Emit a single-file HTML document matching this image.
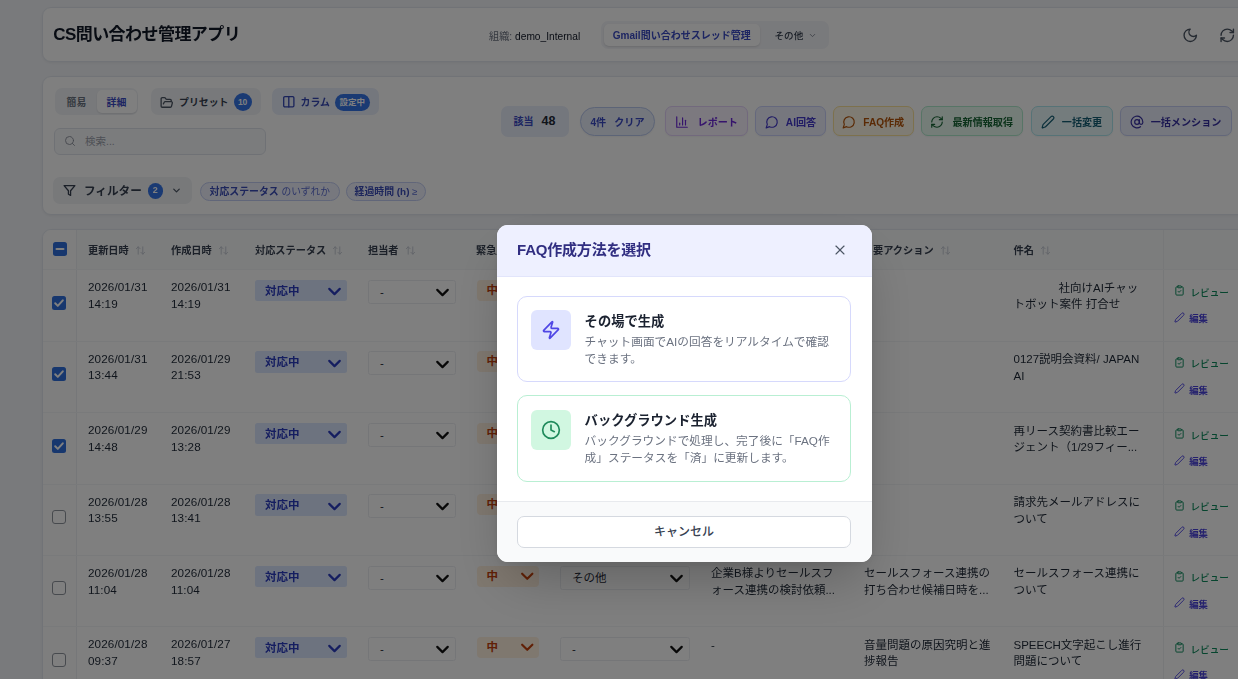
<!DOCTYPE html>
<html lang="ja">
<head>
<meta charset="utf-8">
<title>CS問い合わせ管理アプリ</title>
<style>
*{box-sizing:border-box;margin:0;padding:0}
html,body{width:1238px;height:679px;overflow:hidden}
body{font-family:"Liberation Sans","Noto Sans CJK JP",sans-serif;background:#f3f5f9;color:#1f2937;position:relative;font-size:12px}
#bg{position:absolute;left:0;top:0;width:1238px;height:679px;overflow:hidden;filter:blur(.55px)}
.card{position:absolute;background:#fff;border:1px solid #e3e7ee;border-radius:9px;box-shadow:0 1px 3px rgba(0,0,0,.06)}
.abs{position:absolute}
svg{display:block}
#hdr{left:42px;top:7px;width:1260px;height:55px}
#title{left:53.2px;top:21.2px;font-size:17px;font-weight:700;color:#111827;line-height:28px;white-space:nowrap;letter-spacing:-.55px}
#org{left:489px;top:29.5px;font-size:10.2px;line-height:14px;color:#6b7280;white-space:nowrap}
#org b{color:#111827;font-weight:400}
#tabs{left:601px;top:20.5px;width:228px;height:28px;background:#f3f4f8;border-radius:7px}
#tab1{left:604px;top:23.5px;width:155.5px;height:22.5px;background:#fff;border-radius:5px;box-shadow:0 1px 2px rgba(0,0,0,.12);font-size:10px;font-weight:700;color:#3b4bc4;text-align:center;line-height:24.5px;white-space:nowrap}
#tab2{left:774.5px;top:23.5px;height:22.5px;font-size:9.6px;line-height:24.5px;color:#374151;white-space:nowrap;font-weight:500}
#tb{left:42px;top:75.5px;width:1260px;height:139px}
.pillbox{position:absolute;background:#f1f3f7;border-radius:7px}
.tbtxt{position:absolute;white-space:nowrap;font-weight:700}
.badge{background:#3474e6;color:#fff;text-align:center;font-weight:700}
#search{left:54px;top:128px;width:212px;height:26.5px;border:1px solid #dfe3ea;border-radius:6px;background:#f7f8fb}
#cnt{left:500.5px;top:105.5px;width:68px;height:31px;border-radius:7px;background:#e8eefb;font-weight:700;text-align:center;line-height:31px;white-space:nowrap}
.btn{position:absolute;top:106px;height:30px;border-radius:7px;border:1.5px solid;font-size:10.1px;font-weight:700;white-space:nowrap;display:flex;align-items:center;justify-content:center;gap:6px;box-shadow:0 1px 2px rgba(0,0,0,.05);padding-top:1px}
.chip{position:absolute;top:181.5px;height:19px;border-radius:10px;border:1px solid #c3cdf2;background:#eef1fd;font-size:9.9px;line-height:17px;color:#3b4cb8;white-space:nowrap;text-align:center;font-weight:700}
.chip i{font-style:normal;font-weight:400;color:#5b6bd0;font-size:9.7px}
#tbl{left:42px;top:228.5px;width:1260px;height:520px}
#thbg{left:43px;top:229.5px;width:1200px;height:40px;background:#f9fafb;border-bottom:1px solid #e9ecf0;border-top-left-radius:9px}
#stick{left:43px;top:229.5px;width:34px;height:460px;border-right:1px solid #eceff3;background:#fcfcfd;border-top-left-radius:9px}
.th{position:absolute;top:244px;font-size:10.2px;font-weight:700;color:#374151;line-height:14px;white-space:nowrap}
.row{position:absolute;left:43px;width:1260px;height:72px;border-top:1px solid #f3f4f7}
.row>*{position:absolute}
.dt{font-size:11.7px;line-height:16.7px;color:#1f2937;top:9px;white-space:nowrap;letter-spacing:.1px}
.cb{width:14px;height:14px;border-radius:2.5px}
.row .cb{left:9.2px;top:25.6px}
.cb.on{background:#2f6fdd}
.cb.off{border:1.4px solid #8e949d;background:#fff;border-radius:3px}
.st{left:212.4px;top:9.7px;width:92px;height:21.5px;border-radius:2.5px;background:#dbe7ff;color:#2b3cc0;font-weight:700;font-size:11.5px;line-height:22.5px;padding-left:9.5px}
.sel{top:9.7px;height:24px;border:1px solid #ebedf1;border-radius:2.5px;background:#fff;font-size:11.5px;line-height:22px;padding-left:11px;color:#1f2937}
.ur{left:433.5px;top:9.7px;width:62.5px;height:21px;border-radius:4px;background:#fff0df;color:#c2410c;font-weight:700;font-size:11.5px;line-height:21px;padding-left:10px}
.tx{font-size:11.5px;line-height:16.6px;color:#1f2937;top:9.5px}
.redact{display:inline-block;width:45px;height:10px}
.actbg{left:1120px;top:0;width:140px;height:71.5px;border-left:1px solid #eef0f3}
.rv{left:1131.5px;top:15.6px;font-size:9.6px;line-height:14px;color:#0c8a5c;font-weight:500;white-space:nowrap;display:flex;gap:5px;align-items:center}
.ed{left:1131.5px;top:42px;font-size:9.4px;line-height:14px;color:#4a43dc;font-weight:700;white-space:nowrap;display:flex;gap:4.5px;align-items:center}
#ov{position:absolute;left:0;top:0;width:1238px;height:679px;background:rgba(0,0,0,.5)}
#modal{position:absolute;left:497px;top:224.5px;width:374.5px;height:337px;background:#fff;border-radius:11px;overflow:hidden;box-shadow:0 25px 50px -12px rgba(0,0,0,.25),0 2px 8px rgba(0,0,0,.07)}
#mh{position:absolute;left:0;top:0;width:375px;height:52.3px;background:#eef0ff;border-bottom:1px solid #e2e5fb}
#mt{position:absolute;left:20px;top:13.8px;font-size:15px;font-weight:700;color:#312e81;line-height:24px;white-space:nowrap;letter-spacing:-.2px}
.opt{position:absolute;left:19.8px;width:334.5px;border-radius:10px;background:#fff;border:1.5px solid}
.ico{position:absolute;left:13px;top:13.5px;width:40px;height:40px;border-radius:6px;display:flex;align-items:center;justify-content:center}
.ot{position:absolute;left:66.8px;top:15px;font-size:13.3px;font-weight:700;color:#1b2230;line-height:20px;white-space:nowrap}
.od{position:absolute;left:66.8px;top:36px;width:252px;font-size:11.7px;line-height:17px;color:#6b7280}
#mf{position:absolute;left:0;top:276.3px;width:375px;height:62px;background:#f9fafb;border-top:1px solid #e8eaee}
#cancel{position:absolute;left:19.8px;top:14.2px;width:334.5px;height:32px;border:1px solid #d5d9e0;border-radius:7px;background:#fff;text-align:center;font-size:12px;line-height:30px;color:#374151;font-weight:500}

#acth{left:1163px;top:229.5px;width:1px;height:40px;background:#eef0f3}

</style>
</head>
<body>
<div id="bg">
<!-- HEADER -->
<div class="card" id="hdr"></div>
<div class="abs" id="title">CS問い合わせ管理アプリ</div>
<div class="abs" id="org">組織: <b>demo_Internal</b></div>
<div class="abs" id="tabs"></div>
<div class="abs" id="tab1">Gmail問い合わせスレッド管理</div>
<div class="abs" id="tab2">その他<svg width="9" height="9" viewBox="0 0 24 24" fill="none" stroke="#6b7280" stroke-width="2" stroke-linecap="round" stroke-linejoin="round" style="flex:none;display:inline-block;margin-left:5px;vertical-align:-1px"><path d="m6 9 6 6 6-6"/></svg></div>
<div class="abs" style="left:1181.9px;top:26.6px"><svg width="16.5" height="16.5" viewBox="0 0 24 24" fill="none" stroke="#4b5563" stroke-width="2" stroke-linecap="round" stroke-linejoin="round" style="flex:none;"><path d="M12 3a6 6 0 0 0 9 9 9 9 0 1 1-9-9Z"/></svg></div>
<div class="abs" style="left:1218.5px;top:26.6px"><svg width="16.5" height="16.5" viewBox="0 0 24 24" fill="none" stroke="#4b5563" stroke-width="2" stroke-linecap="round" stroke-linejoin="round" style="flex:none;"><path d="M3 12a9 9 0 0 1 9-9 9.75 9.75 0 0 1 6.74 2.74L21 8"/><path d="M21 3v5h-5"/><path d="M21 12a9 9 0 0 1-9 9 9.75 9.75 0 0 1-6.74-2.74L3 16"/><path d="M8 16H3v5"/></svg></div>
<!-- TOOLBAR -->
<div class="card" id="tb"></div>
<div class="pillbox" style="left:55px;top:88px;width:83px;height:27px"></div>
<div class="abs" style="left:97px;top:90px;width:39.5px;height:23px;background:#fff;border-radius:5px;box-shadow:0 1px 2px rgba(0,0,0,.1)"></div>
<div class="tbtxt" style="left:66.5px;top:96px;font-size:9.9px;line-height:14px;color:#6b7280">簡易</div>
<div class="tbtxt" style="left:106.5px;top:96px;font-size:9.9px;line-height:14px;color:#3b4bc4">詳細</div>
<div class="pillbox" style="left:151px;top:88px;width:110px;height:27px"></div>
<div class="abs" style="left:160px;top:95.5px"><svg width="13.5" height="13.5" viewBox="0 0 24 24" fill="none" stroke="#4b5563" stroke-width="2.3" stroke-linecap="round" stroke-linejoin="round" style="flex:none;"><path d="m6 14 1.5-2.9A2 2 0 0 1 9.24 10H20a2 2 0 0 1 1.94 2.5l-1.54 6a2 2 0 0 1-1.95 1.5H4a2 2 0 0 1-2-2V5a2 2 0 0 1 2-2h3.9a2 2 0 0 1 1.69.9l.81 1.2a2 2 0 0 0 1.67.9H18a2 2 0 0 1 2 2v2"/></svg></div>
<div class="tbtxt" style="left:179px;top:96px;font-size:9.9px;line-height:14px;color:#374151">プリセット</div>
<div class="abs badge" style="left:233.5px;top:93px;width:18px;height:18px;border-radius:9px;line-height:18px;font-size:8.5px;letter-spacing:-.3px">10</div>
<div class="pillbox" style="left:272px;top:88px;width:107px;height:27px;background:#e9eefb"></div>
<div class="abs" style="left:281.6px;top:95px"><svg width="13.6" height="13.6" viewBox="0 0 24 24" fill="none" stroke="#3447b5" stroke-width="2.3" stroke-linecap="round" stroke-linejoin="round" style="flex:none;"><rect x="3" y="3" width="18" height="18" rx="2"/><path d="M12 3v18"/></svg></div>
<div class="tbtxt" style="left:300.5px;top:96px;font-size:9.9px;line-height:14px;color:#3447b5">カラム</div>
<div class="abs badge" style="left:335px;top:94px;width:34.5px;height:16.5px;border-radius:9px;line-height:16.5px;font-size:8.5px">設定中</div>
<div class="abs" id="search"></div>
<div class="abs" style="left:63.5px;top:135px"><svg width="12" height="12" viewBox="0 0 24 24" fill="none" stroke="#8a909b" stroke-width="1.8" stroke-linecap="round" stroke-linejoin="round" style="flex:none;"><circle cx="11" cy="11" r="8"/><path d="m21 21-4.3-4.3"/></svg></div>
<div class="abs" style="left:85px;top:134px;font-size:10.5px;line-height:14px;color:#9aa0aa;white-space:nowrap">検索...</div>
<div class="pillbox" style="left:53px;top:177px;width:139px;height:27px;background:#f0f2f5"></div>
<div class="abs" style="left:63px;top:184px"><svg width="13" height="13" viewBox="0 0 24 24" fill="none" stroke="#374151" stroke-width="2.4" stroke-linecap="round" stroke-linejoin="round" style="flex:none;"><polygon points="22 3 2 3 10 12.46 10 19 14 21 14 12.46 22 3"/></svg></div>
<div class="tbtxt" style="left:84px;top:183.1px;font-size:11.6px;line-height:16px;color:#374151">フィルター</div>
<div class="abs badge" style="left:147.5px;top:183.3px;width:15.5px;height:15.5px;border-radius:8px;line-height:15.5px;font-size:9px">2</div>
<div class="abs" style="left:170.5px;top:184.6px"><svg width="11" height="11" viewBox="0 0 24 24" fill="none" stroke="#4b5563" stroke-width="2.7" stroke-linecap="round" stroke-linejoin="round" style="flex:none;"><path d="m6 9 6 6 6-6"/></svg></div>
<div class="chip" style="left:200px;width:139.5px">対応ステータス<i>&nbsp;のいずれか</i></div>
<div class="chip" style="left:346px;width:80px">経過時間 (h)<i>&nbsp;≥</i></div>
<div class="abs" id="cnt"><span style="color:#3b4bc4;font-size:10px">該当</span><span style="color:#1f2937;font-size:12.5px;margin-left:8px">48</span></div>
<div class="btn" style="left:580px;width:75px;color:#3b4bc4;background:#e8eefb;border-color:#b9c8ee;border-radius:16px;gap:8px;top:106.5px;height:29px"><span>4件</span><span>クリア</span></div>
<div class="btn" style="left:665px;width:82.5px;color:#6d28d9;background:#f8f2ff;border-color:#e4d2fb;gap:9px"><svg width="14" height="14" viewBox="0 0 24 24" fill="none" stroke="#6d28d9" stroke-width="2" stroke-linecap="round" stroke-linejoin="round" style="flex:none;"><path d="M3 3v18h18"/><path d="M18 17V9"/><path d="M13 17V5"/><path d="M8 17v-3"/></svg><span>レポート</span></div>
<div class="btn" style="left:755px;width:71px;color:#4338ca;background:#eceffd;border-color:#cad1fa;gap:7px"><svg width="14" height="14" viewBox="0 0 24 24" fill="none" stroke="#4338ca" stroke-width="2" stroke-linecap="round" stroke-linejoin="round" style="flex:none;"><path d="M7.9 20A9 9 0 1 0 4 16.1L2 22Z"/></svg><span>AI回答</span></div>
<div class="btn" style="left:832.5px;width:81.5px;color:#b45309;background:#fff9e8;border-color:#fae29a;gap:7px"><svg width="14" height="14" viewBox="0 0 24 24" fill="none" stroke="#b45309" stroke-width="2" stroke-linecap="round" stroke-linejoin="round" style="flex:none;"><path d="M7.9 20A9 9 0 1 0 4 16.1L2 22Z"/></svg><span>FAQ作成</span></div>
<div class="btn" style="left:920.5px;width:102.5px;color:#166534;background:#e8faf1;border-color:#aeeacc;gap:8px"><svg width="14" height="14" viewBox="0 0 24 24" fill="none" stroke="#166534" stroke-width="2" stroke-linecap="round" stroke-linejoin="round" style="flex:none;"><path d="M3 12a9 9 0 0 1 9-9 9.75 9.75 0 0 1 6.74 2.74L21 8"/><path d="M21 3v5h-5"/><path d="M21 12a9 9 0 0 1-9 9 9.75 9.75 0 0 1-6.74-2.74L3 16"/><path d="M8 16H3v5"/></svg><span>最新情報取得</span></div>
<div class="btn" style="left:1030.5px;width:82px;color:#155e75;background:#e8f9fb;border-color:#ade6ee;gap:7px"><svg width="14" height="14" viewBox="0 0 24 24" fill="none" stroke="#155e75" stroke-width="2" stroke-linecap="round" stroke-linejoin="round" style="flex:none;"><path d="M21.174 6.812a1 1 0 0 0-3.986-3.987L3.842 16.174a2 2 0 0 0-.5.83l-1.321 4.352a.5.5 0 0 0 .623.622l4.353-1.32a2 2 0 0 0 .83-.497z"/></svg><span>一括変更</span></div>
<div class="btn" style="left:1119.5px;width:112px;color:#3730a3;background:#eaeefc;border-color:#c6cff5;gap:7px"><svg width="14" height="14" viewBox="0 0 24 24" fill="none" stroke="#3730a3" stroke-width="2" stroke-linecap="round" stroke-linejoin="round" style="flex:none;"><circle cx="12" cy="12" r="4"/><path d="M16 8v5a3 3 0 0 0 6 0v-1a10 10 0 1 0-4 8"/></svg><span>一括メンション</span></div>
<!-- TABLE -->
<div class="card" id="tbl"></div>
<div class="abs" id="thbg"></div>
<div class="abs" id="stick"></div>
<div class="abs" id="acth"></div>
<div class="abs cb on" style="left:52.5px;top:241.5px"><svg width="14" height="14" viewBox="0 0 14 14" fill="none" stroke="#fff" stroke-width="2.2" stroke-linecap="round"><path d="M3.6 7h6.8"/></svg></div>
<div class="th" style="left:88px">更新日時<svg width="11" height="11" viewBox="0 0 24 24" fill="none" stroke="#c3c8d1" stroke-width="2" stroke-linecap="round" stroke-linejoin="round" style="flex:none;display:inline-block;vertical-align:-2px;margin-left:6px"><path d="m21 16-4 4-4-4"/><path d="M17 20V4"/><path d="m3 8 4-4 4 4"/><path d="M7 4v16"/></svg></div><div class="th" style="left:171px">作成日時<svg width="11" height="11" viewBox="0 0 24 24" fill="none" stroke="#c3c8d1" stroke-width="2" stroke-linecap="round" stroke-linejoin="round" style="flex:none;display:inline-block;vertical-align:-2px;margin-left:6px"><path d="m21 16-4 4-4-4"/><path d="M17 20V4"/><path d="m3 8 4-4 4 4"/><path d="M7 4v16"/></svg></div><div class="th" style="left:255px">対応ステータス<svg width="11" height="11" viewBox="0 0 24 24" fill="none" stroke="#c3c8d1" stroke-width="2" stroke-linecap="round" stroke-linejoin="round" style="flex:none;display:inline-block;vertical-align:-2px;margin-left:6px"><path d="m21 16-4 4-4-4"/><path d="M17 20V4"/><path d="m3 8 4-4 4 4"/><path d="M7 4v16"/></svg></div><div class="th" style="left:368px">担当者<svg width="11" height="11" viewBox="0 0 24 24" fill="none" stroke="#c3c8d1" stroke-width="2" stroke-linecap="round" stroke-linejoin="round" style="flex:none;display:inline-block;vertical-align:-2px;margin-left:6px"><path d="m21 16-4 4-4-4"/><path d="M17 20V4"/><path d="m3 8 4-4 4 4"/><path d="M7 4v16"/></svg></div><div class="th" style="left:476px">緊急度<svg width="11" height="11" viewBox="0 0 24 24" fill="none" stroke="#c3c8d1" stroke-width="2" stroke-linecap="round" stroke-linejoin="round" style="flex:none;display:inline-block;vertical-align:-2px;margin-left:6px"><path d="m21 16-4 4-4-4"/><path d="M17 20V4"/><path d="m3 8 4-4 4 4"/><path d="M7 4v16"/></svg></div><div class="th" style="left:560px">カテゴリ<svg width="11" height="11" viewBox="0 0 24 24" fill="none" stroke="#c3c8d1" stroke-width="2" stroke-linecap="round" stroke-linejoin="round" style="flex:none;display:inline-block;vertical-align:-2px;margin-left:6px"><path d="m21 16-4 4-4-4"/><path d="M17 20V4"/><path d="m3 8 4-4 4 4"/><path d="M7 4v16"/></svg></div><div class="th" style="left:711px">内容</div><div class="th" style="left:873px">要アクション<svg width="11" height="11" viewBox="0 0 24 24" fill="none" stroke="#c3c8d1" stroke-width="2" stroke-linecap="round" stroke-linejoin="round" style="flex:none;display:inline-block;vertical-align:-2px;margin-left:6px"><path d="m21 16-4 4-4-4"/><path d="M17 20V4"/><path d="m3 8 4-4 4 4"/><path d="M7 4v16"/></svg></div><div class="th" style="left:1013.5px">件名<svg width="11" height="11" viewBox="0 0 24 24" fill="none" stroke="#c3c8d1" stroke-width="2" stroke-linecap="round" stroke-linejoin="round" style="flex:none;display:inline-block;vertical-align:-2px;margin-left:6px"><path d="m21 16-4 4-4-4"/><path d="M17 20V4"/><path d="m3 8 4-4 4 4"/><path d="M7 4v16"/></svg></div>
<div class="row" style="top:269.3px">
<div class="cb on"><svg width="14" height="14" viewBox="0 0 14 14" fill="none" stroke="#fff" stroke-width="2" stroke-linecap="round" stroke-linejoin="round"><path d="M3.2 7.3l2.6 2.6 5-5.6"/></svg></div>
<div class="dt" style="left:45px">2026/01/31<br>14:19</div>
<div class="dt" style="left:128px">2026/01/31<br>14:19</div>
<div class="st">対応中<svg width="21" height="21" viewBox="0 0 24 24" fill="none" stroke="#2b3cc0" stroke-width="2.5" stroke-linecap="round" stroke-linejoin="round" style="flex:none;position:absolute;right:2.4px;top:1.4px"><path d="m6 9 6 6 6-6"/></svg></div>
<div class="sel" style="left:325px;width:88px">-<svg width="21" height="21" viewBox="0 0 24 24" fill="none" stroke="#111" stroke-width="2.5" stroke-linecap="round" stroke-linejoin="round" style="flex:none;position:absolute;right:2.3px;top:1.2px"><path d="m6 9 6 6 6-6"/></svg></div>
<div class="ur">中<svg width="20.5" height="20.5" viewBox="0 0 24 24" fill="none" stroke="#c2410c" stroke-width="2.5" stroke-linecap="round" stroke-linejoin="round" style="flex:none;position:absolute;right:2px;top:.5px"><path d="m6 9 6 6 6-6"/></svg></div>
<div class="sel" style="left:517px;width:130px">-<svg width="21" height="21" viewBox="0 0 24 24" fill="none" stroke="#111" stroke-width="2.5" stroke-linecap="round" stroke-linejoin="round" style="flex:none;position:absolute;right:2.3px;top:1.2px"><path d="m6 9 6 6 6-6"/></svg></div>
<div class="tx" style="left:668px;width:128px"></div>
<div class="tx" style="left:821px;width:134px"></div>
<div class="tx" style="left:970.5px;width:134px"><span class="redact"></span>社向けAIチャットボット案件 打合せ</div>
<div class="actbg"></div>
<div class="rv"><svg width="11" height="11" viewBox="0 0 24 24" fill="none" stroke="#0c8a5c" stroke-width="2.1" stroke-linecap="round" stroke-linejoin="round" style="flex:none;position:relative;left:-.8px;top:-2.1px"><rect x="8" y="2" width="8" height="4" rx="1"/><path d="M16 4h2a2 2 0 0 1 2 2v14a2 2 0 0 1-2 2H6a2 2 0 0 1-2-2V6a2 2 0 0 1 2-2h2"/><path d="m9 14 2 2 4-4"/></svg><span>レビュー</span></div>
<div class="ed"><svg width="11" height="11" viewBox="0 0 24 24" fill="none" stroke="#4f46e5" stroke-width="2.1" stroke-linecap="round" stroke-linejoin="round" style="flex:none;position:relative;left:-.8px;top:-2px"><path d="M21.174 6.812a1 1 0 0 0-3.986-3.987L3.842 16.174a2 2 0 0 0-.5.83l-1.321 4.352a.5.5 0 0 0 .623.622l4.353-1.32a2 2 0 0 0 .83-.497z"/></svg><span style="position:relative;left:-.8px">編集</span></div>
</div>
<div class="row" style="top:340.70000000000005px">
<div class="cb on"><svg width="14" height="14" viewBox="0 0 14 14" fill="none" stroke="#fff" stroke-width="2" stroke-linecap="round" stroke-linejoin="round"><path d="M3.2 7.3l2.6 2.6 5-5.6"/></svg></div>
<div class="dt" style="left:45px">2026/01/31<br>13:44</div>
<div class="dt" style="left:128px">2026/01/29<br>21:53</div>
<div class="st">対応中<svg width="21" height="21" viewBox="0 0 24 24" fill="none" stroke="#2b3cc0" stroke-width="2.5" stroke-linecap="round" stroke-linejoin="round" style="flex:none;position:absolute;right:2.4px;top:1.4px"><path d="m6 9 6 6 6-6"/></svg></div>
<div class="sel" style="left:325px;width:88px">-<svg width="21" height="21" viewBox="0 0 24 24" fill="none" stroke="#111" stroke-width="2.5" stroke-linecap="round" stroke-linejoin="round" style="flex:none;position:absolute;right:2.3px;top:1.2px"><path d="m6 9 6 6 6-6"/></svg></div>
<div class="ur">中<svg width="20.5" height="20.5" viewBox="0 0 24 24" fill="none" stroke="#c2410c" stroke-width="2.5" stroke-linecap="round" stroke-linejoin="round" style="flex:none;position:absolute;right:2px;top:.5px"><path d="m6 9 6 6 6-6"/></svg></div>
<div class="sel" style="left:517px;width:130px">-<svg width="21" height="21" viewBox="0 0 24 24" fill="none" stroke="#111" stroke-width="2.5" stroke-linecap="round" stroke-linejoin="round" style="flex:none;position:absolute;right:2.3px;top:1.2px"><path d="m6 9 6 6 6-6"/></svg></div>
<div class="tx" style="left:668px;width:128px"></div>
<div class="tx" style="left:821px;width:134px"></div>
<div class="tx" style="left:970.5px;width:134px">0127説明会資料/ JAPAN AI</div>
<div class="actbg"></div>
<div class="rv"><svg width="11" height="11" viewBox="0 0 24 24" fill="none" stroke="#0c8a5c" stroke-width="2.1" stroke-linecap="round" stroke-linejoin="round" style="flex:none;position:relative;left:-.8px;top:-2.1px"><rect x="8" y="2" width="8" height="4" rx="1"/><path d="M16 4h2a2 2 0 0 1 2 2v14a2 2 0 0 1-2 2H6a2 2 0 0 1-2-2V6a2 2 0 0 1 2-2h2"/><path d="m9 14 2 2 4-4"/></svg><span>レビュー</span></div>
<div class="ed"><svg width="11" height="11" viewBox="0 0 24 24" fill="none" stroke="#4f46e5" stroke-width="2.1" stroke-linecap="round" stroke-linejoin="round" style="flex:none;position:relative;left:-.8px;top:-2px"><path d="M21.174 6.812a1 1 0 0 0-3.986-3.987L3.842 16.174a2 2 0 0 0-.5.83l-1.321 4.352a.5.5 0 0 0 .623.622l4.353-1.32a2 2 0 0 0 .83-.497z"/></svg><span style="position:relative;left:-.8px">編集</span></div>
</div>
<div class="row" style="top:412.1px">
<div class="cb on"><svg width="14" height="14" viewBox="0 0 14 14" fill="none" stroke="#fff" stroke-width="2" stroke-linecap="round" stroke-linejoin="round"><path d="M3.2 7.3l2.6 2.6 5-5.6"/></svg></div>
<div class="dt" style="left:45px">2026/01/29<br>14:48</div>
<div class="dt" style="left:128px">2026/01/29<br>13:28</div>
<div class="st">対応中<svg width="21" height="21" viewBox="0 0 24 24" fill="none" stroke="#2b3cc0" stroke-width="2.5" stroke-linecap="round" stroke-linejoin="round" style="flex:none;position:absolute;right:2.4px;top:1.4px"><path d="m6 9 6 6 6-6"/></svg></div>
<div class="sel" style="left:325px;width:88px">-<svg width="21" height="21" viewBox="0 0 24 24" fill="none" stroke="#111" stroke-width="2.5" stroke-linecap="round" stroke-linejoin="round" style="flex:none;position:absolute;right:2.3px;top:1.2px"><path d="m6 9 6 6 6-6"/></svg></div>
<div class="ur">中<svg width="20.5" height="20.5" viewBox="0 0 24 24" fill="none" stroke="#c2410c" stroke-width="2.5" stroke-linecap="round" stroke-linejoin="round" style="flex:none;position:absolute;right:2px;top:.5px"><path d="m6 9 6 6 6-6"/></svg></div>
<div class="sel" style="left:517px;width:130px">-<svg width="21" height="21" viewBox="0 0 24 24" fill="none" stroke="#111" stroke-width="2.5" stroke-linecap="round" stroke-linejoin="round" style="flex:none;position:absolute;right:2.3px;top:1.2px"><path d="m6 9 6 6 6-6"/></svg></div>
<div class="tx" style="left:668px;width:128px"></div>
<div class="tx" style="left:821px;width:134px"></div>
<div class="tx" style="left:970.5px;width:134px">再リース契約書比較エージェント（1/29フィー...</div>
<div class="actbg"></div>
<div class="rv"><svg width="11" height="11" viewBox="0 0 24 24" fill="none" stroke="#0c8a5c" stroke-width="2.1" stroke-linecap="round" stroke-linejoin="round" style="flex:none;position:relative;left:-.8px;top:-2.1px"><rect x="8" y="2" width="8" height="4" rx="1"/><path d="M16 4h2a2 2 0 0 1 2 2v14a2 2 0 0 1-2 2H6a2 2 0 0 1-2-2V6a2 2 0 0 1 2-2h2"/><path d="m9 14 2 2 4-4"/></svg><span>レビュー</span></div>
<div class="ed"><svg width="11" height="11" viewBox="0 0 24 24" fill="none" stroke="#4f46e5" stroke-width="2.1" stroke-linecap="round" stroke-linejoin="round" style="flex:none;position:relative;left:-.8px;top:-2px"><path d="M21.174 6.812a1 1 0 0 0-3.986-3.987L3.842 16.174a2 2 0 0 0-.5.83l-1.321 4.352a.5.5 0 0 0 .623.622l4.353-1.32a2 2 0 0 0 .83-.497z"/></svg><span style="position:relative;left:-.8px">編集</span></div>
</div>
<div class="row" style="top:483.5px">
<div class="cb off"></div>
<div class="dt" style="left:45px">2026/01/28<br>13:55</div>
<div class="dt" style="left:128px">2026/01/28<br>13:41</div>
<div class="st">対応中<svg width="21" height="21" viewBox="0 0 24 24" fill="none" stroke="#2b3cc0" stroke-width="2.5" stroke-linecap="round" stroke-linejoin="round" style="flex:none;position:absolute;right:2.4px;top:1.4px"><path d="m6 9 6 6 6-6"/></svg></div>
<div class="sel" style="left:325px;width:88px">-<svg width="21" height="21" viewBox="0 0 24 24" fill="none" stroke="#111" stroke-width="2.5" stroke-linecap="round" stroke-linejoin="round" style="flex:none;position:absolute;right:2.3px;top:1.2px"><path d="m6 9 6 6 6-6"/></svg></div>
<div class="ur">中<svg width="20.5" height="20.5" viewBox="0 0 24 24" fill="none" stroke="#c2410c" stroke-width="2.5" stroke-linecap="round" stroke-linejoin="round" style="flex:none;position:absolute;right:2px;top:.5px"><path d="m6 9 6 6 6-6"/></svg></div>
<div class="sel" style="left:517px;width:130px">-<svg width="21" height="21" viewBox="0 0 24 24" fill="none" stroke="#111" stroke-width="2.5" stroke-linecap="round" stroke-linejoin="round" style="flex:none;position:absolute;right:2.3px;top:1.2px"><path d="m6 9 6 6 6-6"/></svg></div>
<div class="tx" style="left:668px;width:128px"></div>
<div class="tx" style="left:821px;width:134px"></div>
<div class="tx" style="left:970.5px;width:134px">請求先メールアドレスについて</div>
<div class="actbg"></div>
<div class="rv"><svg width="11" height="11" viewBox="0 0 24 24" fill="none" stroke="#0c8a5c" stroke-width="2.1" stroke-linecap="round" stroke-linejoin="round" style="flex:none;position:relative;left:-.8px;top:-2.1px"><rect x="8" y="2" width="8" height="4" rx="1"/><path d="M16 4h2a2 2 0 0 1 2 2v14a2 2 0 0 1-2 2H6a2 2 0 0 1-2-2V6a2 2 0 0 1 2-2h2"/><path d="m9 14 2 2 4-4"/></svg><span>レビュー</span></div>
<div class="ed"><svg width="11" height="11" viewBox="0 0 24 24" fill="none" stroke="#4f46e5" stroke-width="2.1" stroke-linecap="round" stroke-linejoin="round" style="flex:none;position:relative;left:-.8px;top:-2px"><path d="M21.174 6.812a1 1 0 0 0-3.986-3.987L3.842 16.174a2 2 0 0 0-.5.83l-1.321 4.352a.5.5 0 0 0 .623.622l4.353-1.32a2 2 0 0 0 .83-.497z"/></svg><span style="position:relative;left:-.8px">編集</span></div>
</div>
<div class="row" style="top:554.9000000000001px">
<div class="cb off"></div>
<div class="dt" style="left:45px">2026/01/28<br>11:04</div>
<div class="dt" style="left:128px">2026/01/28<br>11:04</div>
<div class="st">対応中<svg width="21" height="21" viewBox="0 0 24 24" fill="none" stroke="#2b3cc0" stroke-width="2.5" stroke-linecap="round" stroke-linejoin="round" style="flex:none;position:absolute;right:2.4px;top:1.4px"><path d="m6 9 6 6 6-6"/></svg></div>
<div class="sel" style="left:325px;width:88px">-<svg width="21" height="21" viewBox="0 0 24 24" fill="none" stroke="#111" stroke-width="2.5" stroke-linecap="round" stroke-linejoin="round" style="flex:none;position:absolute;right:2.3px;top:1.2px"><path d="m6 9 6 6 6-6"/></svg></div>
<div class="ur">中<svg width="20.5" height="20.5" viewBox="0 0 24 24" fill="none" stroke="#c2410c" stroke-width="2.5" stroke-linecap="round" stroke-linejoin="round" style="flex:none;position:absolute;right:2px;top:.5px"><path d="m6 9 6 6 6-6"/></svg></div>
<div class="sel" style="left:517px;width:130px">その他<svg width="21" height="21" viewBox="0 0 24 24" fill="none" stroke="#111" stroke-width="2.5" stroke-linecap="round" stroke-linejoin="round" style="flex:none;position:absolute;right:2.3px;top:1.2px"><path d="m6 9 6 6 6-6"/></svg></div>
<div class="tx" style="left:668px;width:128px">企業B様よりセールスフォース連携の検討依頼...</div>
<div class="tx" style="left:821px;width:134px">セールスフォース連携の打ち合わせ候補日時を...</div>
<div class="tx" style="left:970.5px;width:134px">セールスフォース連携について</div>
<div class="actbg"></div>
<div class="rv"><svg width="11" height="11" viewBox="0 0 24 24" fill="none" stroke="#0c8a5c" stroke-width="2.1" stroke-linecap="round" stroke-linejoin="round" style="flex:none;position:relative;left:-.8px;top:-2.1px"><rect x="8" y="2" width="8" height="4" rx="1"/><path d="M16 4h2a2 2 0 0 1 2 2v14a2 2 0 0 1-2 2H6a2 2 0 0 1-2-2V6a2 2 0 0 1 2-2h2"/><path d="m9 14 2 2 4-4"/></svg><span>レビュー</span></div>
<div class="ed"><svg width="11" height="11" viewBox="0 0 24 24" fill="none" stroke="#4f46e5" stroke-width="2.1" stroke-linecap="round" stroke-linejoin="round" style="flex:none;position:relative;left:-.8px;top:-2px"><path d="M21.174 6.812a1 1 0 0 0-3.986-3.987L3.842 16.174a2 2 0 0 0-.5.83l-1.321 4.352a.5.5 0 0 0 .623.622l4.353-1.32a2 2 0 0 0 .83-.497z"/></svg><span style="position:relative;left:-.8px">編集</span></div>
</div>
<div class="row" style="top:626.3px">
<div class="cb off"></div>
<div class="dt" style="left:45px">2026/01/28<br>09:37</div>
<div class="dt" style="left:128px">2026/01/27<br>18:57</div>
<div class="st">対応中<svg width="21" height="21" viewBox="0 0 24 24" fill="none" stroke="#2b3cc0" stroke-width="2.5" stroke-linecap="round" stroke-linejoin="round" style="flex:none;position:absolute;right:2.4px;top:1.4px"><path d="m6 9 6 6 6-6"/></svg></div>
<div class="sel" style="left:325px;width:88px">-<svg width="21" height="21" viewBox="0 0 24 24" fill="none" stroke="#111" stroke-width="2.5" stroke-linecap="round" stroke-linejoin="round" style="flex:none;position:absolute;right:2.3px;top:1.2px"><path d="m6 9 6 6 6-6"/></svg></div>
<div class="ur">中<svg width="20.5" height="20.5" viewBox="0 0 24 24" fill="none" stroke="#c2410c" stroke-width="2.5" stroke-linecap="round" stroke-linejoin="round" style="flex:none;position:absolute;right:2px;top:.5px"><path d="m6 9 6 6 6-6"/></svg></div>
<div class="sel" style="left:517px;width:130px">-<svg width="21" height="21" viewBox="0 0 24 24" fill="none" stroke="#111" stroke-width="2.5" stroke-linecap="round" stroke-linejoin="round" style="flex:none;position:absolute;right:2.3px;top:1.2px"><path d="m6 9 6 6 6-6"/></svg></div>
<div class="tx" style="left:668px;width:128px">-</div>
<div class="tx" style="left:821px;width:134px">音量問題の原因究明と進捗報告</div>
<div class="tx" style="left:970.5px;width:134px">SPEECH文字起こし進行問題について</div>
<div class="actbg"></div>
<div class="rv"><svg width="11" height="11" viewBox="0 0 24 24" fill="none" stroke="#0c8a5c" stroke-width="2.1" stroke-linecap="round" stroke-linejoin="round" style="flex:none;position:relative;left:-.8px;top:-2.1px"><rect x="8" y="2" width="8" height="4" rx="1"/><path d="M16 4h2a2 2 0 0 1 2 2v14a2 2 0 0 1-2 2H6a2 2 0 0 1-2-2V6a2 2 0 0 1 2-2h2"/><path d="m9 14 2 2 4-4"/></svg><span>レビュー</span></div>
<div class="ed"><svg width="11" height="11" viewBox="0 0 24 24" fill="none" stroke="#4f46e5" stroke-width="2.1" stroke-linecap="round" stroke-linejoin="round" style="flex:none;position:relative;left:-.8px;top:-2px"><path d="M21.174 6.812a1 1 0 0 0-3.986-3.987L3.842 16.174a2 2 0 0 0-.5.83l-1.321 4.352a.5.5 0 0 0 .623.622l4.353-1.32a2 2 0 0 0 .83-.497z"/></svg><span style="position:relative;left:-.8px">編集</span></div>
</div>
</div>
<div id="ov"></div>
<div id="modal">
  <div id="mh"><div id="mt">FAQ作成方法を選択</div><div style="position:absolute;left:334.5px;top:17.5px"><svg width="16" height="16" viewBox="0 0 24 24" fill="none" stroke="#4b5563" stroke-width="1.7" stroke-linecap="round" stroke-linejoin="round" style="flex:none;"><path d="M18 6 6 18"/><path d="m6 6 12 12"/></svg></div></div>
  <div class="opt" style="top:71.3px;height:86px;border-color:#d6d9fc">
    <div class="ico" style="background:#e0e4ff"><svg width="20" height="20" viewBox="0 0 24 24" fill="none" stroke="#4f46e5" stroke-width="2" stroke-linecap="round" stroke-linejoin="round" style="flex:none;"><path d="M4 14a1 1 0 0 1-.78-1.63l9.9-10.2a.5.5 0 0 1 .86.46l-1.92 6.02A1 1 0 0 0 13 10h7a1 1 0 0 1 .78 1.63l-9.9 10.2a.5.5 0 0 1-.86-.46l1.92-6.02A1 1 0 0 0 11 14z"/></svg></div>
    <div class="ot">その場で生成</div>
    <div class="od">チャット画面でAIの回答をリアルタイムで確認できます。</div>
  </div>
  <div class="opt" style="top:170.5px;height:86.5px;border-color:#b9efd3">
    <div class="ico" style="background:#d1f7e1"><svg width="20" height="20" viewBox="0 0 24 24" fill="none" stroke="#1f8a5b" stroke-width="2" stroke-linecap="round" stroke-linejoin="round" style="flex:none;"><circle cx="12" cy="12" r="10"/><polyline points="12 6 12 12 16 14"/></svg></div>
    <div class="ot">バックグラウンド生成</div>
    <div class="od">バックグラウンドで処理し、完了後に「FAQ作成」ステータスを「済」に更新します。</div>
  </div>
  <div id="mf"><div id="cancel">キャンセル</div></div>
</div>
</body>
</html>
